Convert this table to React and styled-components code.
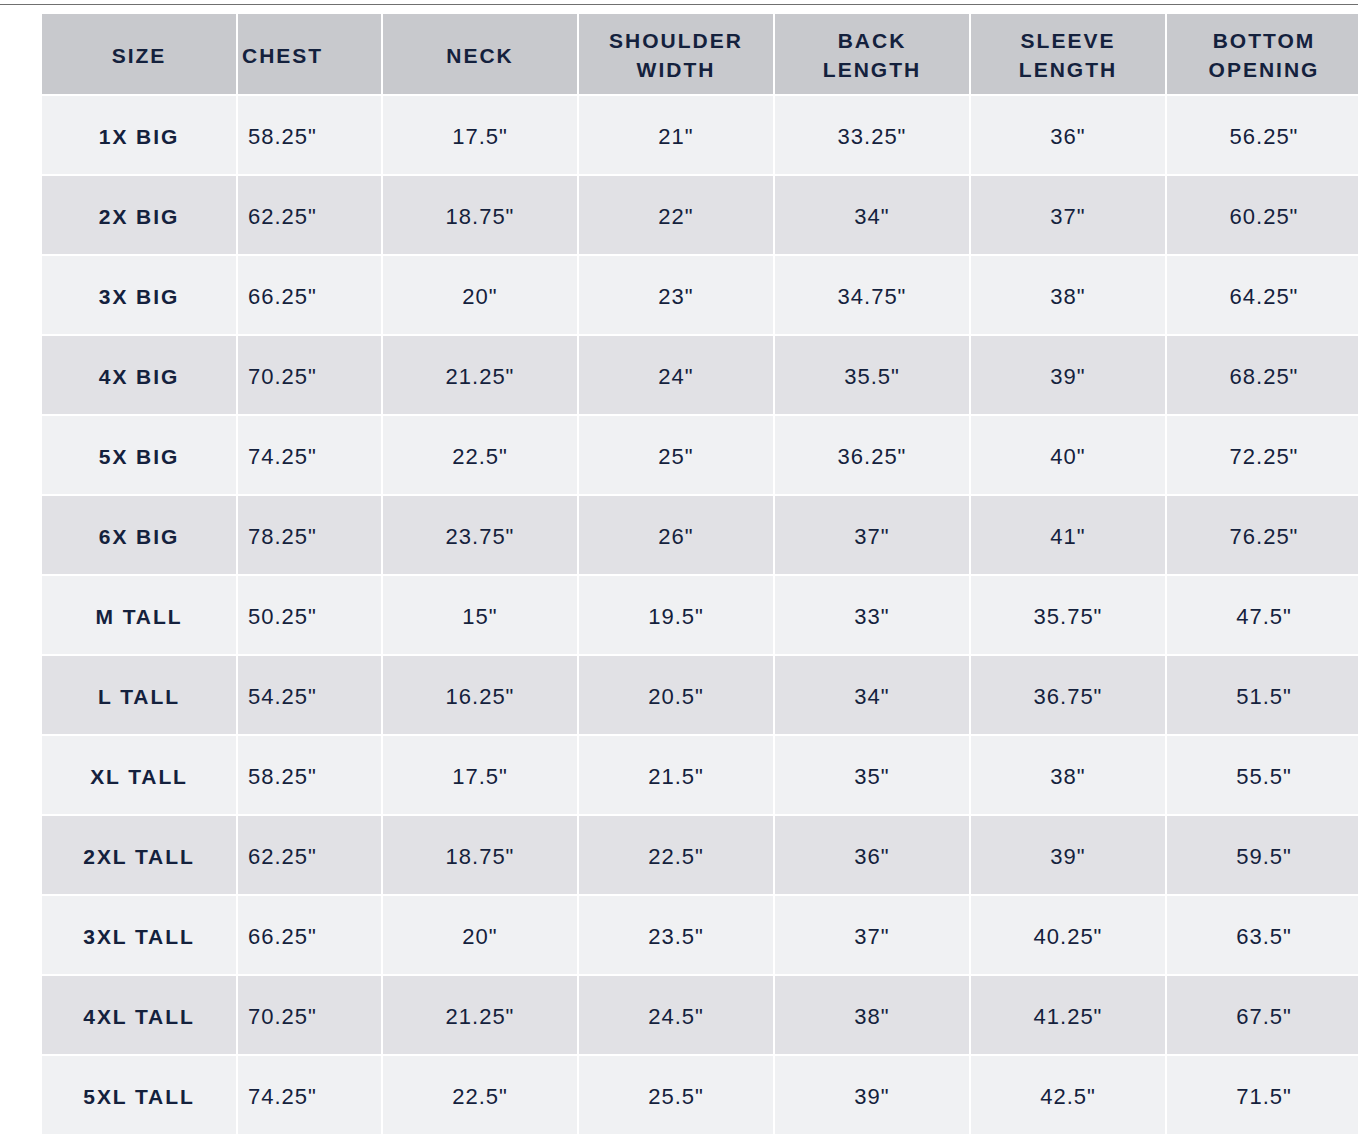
import React from 'react'
import styled, { createGlobalStyle } from 'styled-components'

const GlobalStyle = createGlobalStyle`
  html, body {
    margin: 0;
    padding: 0;
    background: #ffffff;
    overflow: hidden;
  }
  body {
    font-family: "Liberation Sans", Arial, sans-serif;
    color: #14213d;
  }
`;

const Page = styled.div`
    width: 1358px;
    height: 1144px;
    background: #ffffff;
`;

const TopRule = styled.div`
    margin-top: 4px;
    height: 1px;
    background: #707070;
`;

const Table = styled.div`
    margin: 9px 0 0 42px;
    display: grid;
    grid-template-columns: 194px 143px 194px 194px 194px 194px 194px;
    grid-auto-rows: 78px;
    grid-template-rows: 80px;
    gap: 2px;
`;

const HeadCell = styled.div`
    background: #c8c9cd;
    display: flex;
    align-items: center;
    justify-content: ${p => (p.$left ? 'flex-start' : 'center')};
    padding: 2px 0 0 ${p => (p.$left ? '4px' : '0')};
    text-align: ${p => (p.$left ? 'left' : 'center')};
    font-weight: 700;
    font-size: 21px;
    line-height: 29px;
    letter-spacing: 2px;
    color: #14213d;
`;

const Cell = styled.div`
    background: ${p => (p.$odd ? '#f0f1f3' : '#e1e1e5')};
    display: flex;
    align-items: center;
    justify-content: ${p => (p.$left ? 'flex-start' : 'center')};
    padding: 3px 0 0 ${p => (p.$left ? '10px' : '0')};
    font-size: 22px;
    letter-spacing: 1px;
    color: #14213d;
`;

const SizeCell = styled(Cell)`
    font-weight: 700;
    font-size: 21px;
    letter-spacing: 1.9px;
`;

const headers = [
  ['SIZE'],
  ['CHEST'],
  ['NECK'],
  ['SHOULDER', 'WIDTH'],
  ['BACK', 'LENGTH'],
  ['SLEEVE', 'LENGTH'],
  ['BOTTOM', 'OPENING'],
];

const rows = [
  ['1X BIG', '58.25"', '17.5"', '21"', '33.25"', '36"', '56.25"'],
  ['2X BIG', '62.25"', '18.75"', '22"', '34"', '37"', '60.25"'],
  ['3X BIG', '66.25"', '20"', '23"', '34.75"', '38"', '64.25"'],
  ['4X BIG', '70.25"', '21.25"', '24"', '35.5"', '39"', '68.25"'],
  ['5X BIG', '74.25"', '22.5"', '25"', '36.25"', '40"', '72.25"'],
  ['6X BIG', '78.25"', '23.75"', '26"', '37"', '41"', '76.25"'],
  ['M TALL', '50.25"', '15"', '19.5"', '33"', '35.75"', '47.5"'],
  ['L TALL', '54.25"', '16.25"', '20.5"', '34"', '36.75"', '51.5"'],
  ['XL TALL', '58.25"', '17.5"', '21.5"', '35"', '38"', '55.5"'],
  ['2XL TALL', '62.25"', '18.75"', '22.5"', '36"', '39"', '59.5"'],
  ['3XL TALL', '66.25"', '20"', '23.5"', '37"', '40.25"', '63.5"'],
  ['4XL TALL', '70.25"', '21.25"', '24.5"', '38"', '41.25"', '67.5"'],
  ['5XL TALL', '74.25"', '22.5"', '25.5"', '39"', '42.5"', '71.5"'],
];

const App = () => {
  return (
    <Page>
      <GlobalStyle />
      <TopRule />
      <Table>
        {headers.map((lines, i) => (
          <HeadCell key={'h' + i} $left={i === 1}>
            <div>
              {lines.map(l => (
                <div key={l}>{l}</div>
              ))}
            </div>
          </HeadCell>
        ))}
        {rows.map((row, r) =>
          row.map((val, c) =>
            c === 0 ? (
              <SizeCell key={r + '-' + c} $odd={r % 2 === 0}>{val}</SizeCell>
            ) : (
              <Cell key={r + '-' + c} $odd={r % 2 === 0} $left={c === 1}>{val}</Cell>
            )
          )
        )}
      </Table>
    </Page>
  )
}

export default App
